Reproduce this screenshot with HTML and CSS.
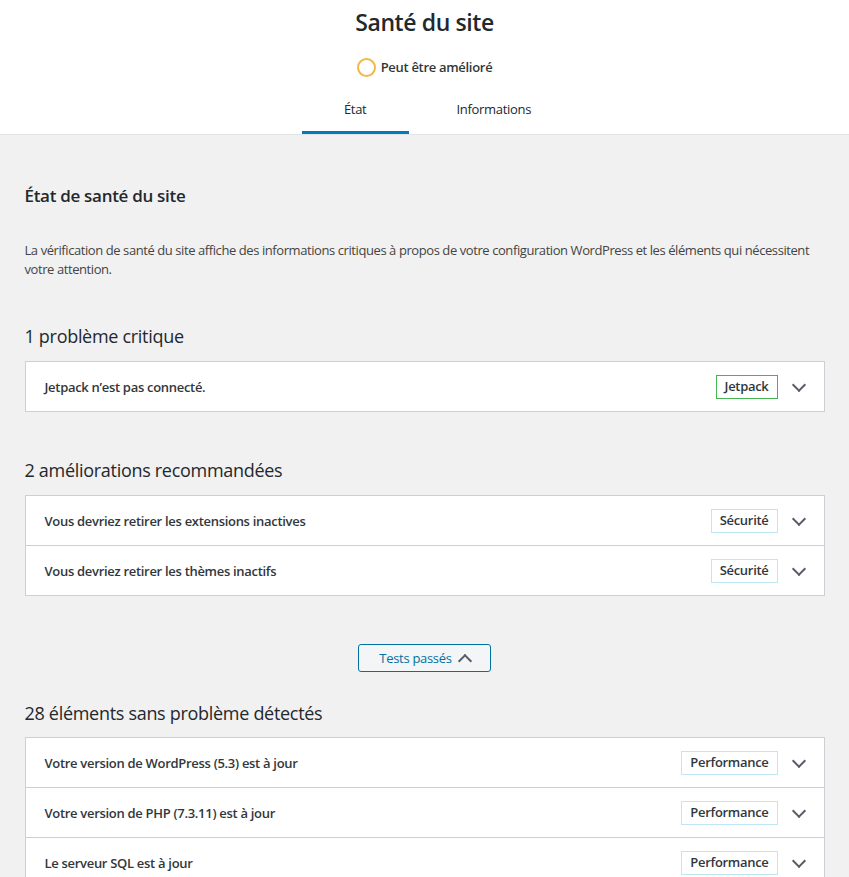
FILE: index.html
```html
<!DOCTYPE html>
<html lang="fr">
<head>
    <meta charset="UTF-8" />
    <title>Santé du site</title>
    <link rel="stylesheet" href="styles.css">
</head>
<body>
    <header class="health-header">
        <h1 class="health-title">Santé du site</h1>
        <div class="health-status">
            <span class="status-ring"></span>
            <span class="status-label">Peut être amélioré</span>
        </div>
        <nav class="health-tabs">
            <a href="#" class="health-tab active">État</a>
            <a href="#" class="health-tab">Informations</a>
        </nav>
    </header>

    <main class="health-body">
        <h2 class="body-title">État de santé du site</h2>
        <p class="body-intro">La vérification de santé du site affiche des informations critiques à propos de votre configuration WordPress et les éléments qui nécessitent votre attention.</p>

        <section class="issue-group">
            <h3 class="group-title">1 problème critique</h3>
            <div class="accordion">
                <div class="accordion-row">
                    <span class="row-title">Jetpack n’est pas connecté.</span>
                    <span class="badge green">Jetpack</span>
                    <span class="chevron"></span>
                </div>
            </div>
        </section>

        <section class="issue-group">
            <h3 class="group-title">2 améliorations recommandées</h3>
            <div class="accordion">
                <div class="accordion-row">
                    <span class="row-title">Vous devriez retirer les extensions inactives</span>
                    <span class="badge blue">Sécurité</span>
                    <span class="chevron"></span>
                </div>
                <div class="accordion-row">
                    <span class="row-title">Vous devriez retirer les thèmes inactifs</span>
                    <span class="badge blue">Sécurité</span>
                    <span class="chevron"></span>
                </div>
            </div>
        </section>

        <div class="passed-toggle">
            <button type="button" class="passed-btn">Tests passés <span class="chevron up"></span></button>
        </div>

        <section class="issue-group passed">
            <h3 class="group-title">28 éléments sans problème détectés</h3>
            <div class="accordion">
                <div class="accordion-row">
                    <span class="row-title">Votre version de WordPress (5.3) est à jour</span>
                    <span class="badge blue">Performance</span>
                    <span class="chevron"></span>
                </div>
                <div class="accordion-row">
                    <span class="row-title">Votre version de PHP (7.3.11) est à jour</span>
                    <span class="badge blue">Performance</span>
                    <span class="chevron"></span>
                </div>
                <div class="accordion-row">
                    <span class="row-title">Le serveur SQL est à jour</span>
                    <span class="badge blue">Performance</span>
                    <span class="chevron"></span>
                </div>
            </div>
        </section>
    </main>
</body>
</html>
```

FILE: styles.css
```css
* {
    margin: 0;
    padding: 0;
    box-sizing: border-box;
}
body {
    font-family: "Open Sans", "Noto Sans", sans-serif;
    font-size: 13px;
    line-height: 1.4;
    letter-spacing: -0.3px;
    color: #444;
    background: #f1f1f1;
    overflow: hidden;
}

/* header */
.health-header {
    background: #fff;
    border-bottom: 1px solid #e2e4e7;
    text-align: center;
}
.health-title {
    font-size: 23px;
    font-weight: 600;
    line-height: 30px;
    letter-spacing: -0.4px;
    color: #23282d;
    padding-top: 7px;
}
.health-status {
    display: flex;
    align-items: center;
    justify-content: center;
    gap: 5px;
    margin-top: 21px;
}
.status-ring {
    width: 19px;
    height: 19px;
    border: 2px solid #f0b849;
    border-radius: 50%;
}
.status-label {
    font-weight: 600;
    color: #32373c;
}
.health-tabs {
    display: inline-grid;
    grid-template-columns: 1fr 1fr;
    margin-top: 15px;
}
.health-tab {
    display: block;
    margin: 0 16px;
    padding: 8px 16px 16px;
    color: #23282d;
    text-decoration: none;
}
.health-tab.active {
    box-shadow: inset 0 -3px #007cba;
}

/* body */
.health-body {
    max-width: 800px;
    margin: 0 auto;
    padding-top: 49px;
}
.body-title {
    font-size: 17px;
    font-weight: 600;
    color: #23282d;
    line-height: 24px;
}
.body-intro {
    margin-top: 33px;
    line-height: 19px;
    letter-spacing: -0.42px;
}
.issue-group {
    margin-top: 46px;
}
.body-intro + .issue-group {
    margin-top: 45px;
}
.group-title {
    font-size: 18px;
    font-weight: 400;
    color: #23282d;
    line-height: 24px;
    margin-bottom: 13px;
}
.accordion {
    background: #fff;
    border: 1px solid #ccd0d4;
}
.accordion-row {
    display: flex;
    align-items: center;
    height: 49px;
    padding: 0 46px 0 19px;
    position: relative;
    color: #32373c;
    font-weight: 600;
}
.accordion-row + .accordion-row {
    border-top: 1px solid #ccd0d4;
    height: 50px;
}
.row-title {
    flex: 1;
}
.badge {
    padding: 1px 8px 2px;
    color: #32373c;
    font-weight: 600;
    line-height: 19px;
}
.badge.green {
    border: 1px solid #46b450;
}
.badge.blue {
    border: 1px solid #bfe7f3;
}
.chevron {
    position: absolute;
    right: 20px;
    top: 50%;
    width: 10px;
    height: 10px;
    border: solid #555d66;
    border-width: 0 2px 2px 0;
    transform: translateY(-70%) rotate(45deg);
}

/* passed tests toggle */
.passed-toggle {
    display: flex;
    justify-content: center;
    margin-top: 48px;
}
.passed-btn {
    display: flex;
    align-items: center;
    gap: 8px;
    height: 28px;
    padding: 0 20px;
    font: inherit;
    letter-spacing: inherit;
    white-space: nowrap;
    color: #0071a1;
    background: #f3f5f6;
    border: 1px solid #0071a1;
    border-radius: 3px;
    cursor: pointer;
}
.passed-btn .chevron.up {
    position: static;
    transform: translateY(30%) rotate(-135deg);
}
.issue-group.passed {
    margin-top: 29px;
}
.issue-group.passed .group-title {
    margin-bottom: 12px;
}
```
